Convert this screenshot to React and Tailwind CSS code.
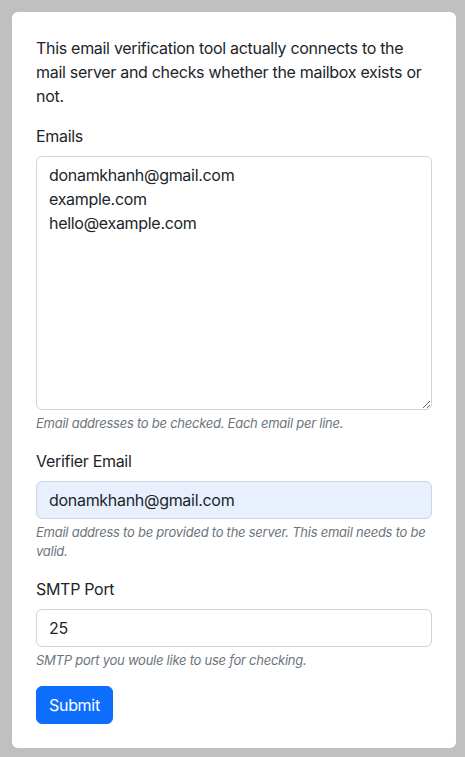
export default function App() {
  return (
    <div className="min-h-[757px] bg-[#c0c0c0] p-3 font-['Inter',sans-serif] text-[16px] leading-6 tracking-[-0.3px] text-[#212529]">
      <form
        className="w-[444px] rounded-md bg-white p-6"
        onSubmit={(e) => e.preventDefault()}
      >
        <p className="mb-4">
          This email verification tool actually connects to the mail server and checks whether the mailbox exists or not.
        </p>

        <div className="mb-4">
          <label className="mb-2 block">Emails</label>
          <textarea
            className="block h-[254px] w-full rounded-md border border-[#ced4da] px-3 py-1.5 text-[#212529] outline-none"
            defaultValue={'donamkhanh@gmail.com\nexample.com\nhello@example.com'}
          />
          <div className="mt-1 text-[13px] italic leading-[19px] tracking-[-0.25px] text-[#6c757d]">
            Email addresses to be checked. Each email per line.
          </div>
        </div>

        <div className="mb-4">
          <label className="mb-2 block">Verifier Email</label>
          <input
            className="block h-[38px] w-full rounded-md border border-[#ced4da] bg-[#e8f0fe] px-3 py-1.5 text-[#212529] outline-none"
            defaultValue="donamkhanh@gmail.com"
          />
          <div className="mt-1 text-[13px] italic leading-[19px] tracking-[-0.25px] text-[#6c757d]">
            Email address to be provided to the server. This email needs to be valid.
          </div>
        </div>

        <div className="mb-4">
          <label className="mb-2 block">SMTP Port</label>
          <input
            className="block h-[38px] w-full rounded-md border border-[#ced4da] px-3 py-1.5 text-[#212529] outline-none"
            defaultValue="25"
          />
          <div className="mt-1 text-[13px] italic leading-[19px] tracking-[-0.25px] text-[#6c757d]">
            SMTP port you woule like to use for checking.
          </div>
        </div>

        <button
          type="submit"
          className="h-[38px] rounded-md border border-[#0d6efd] bg-[#0d6efd] px-3 text-white"
        >
          Submit
        </button>
      </form>
    </div>
  )
}
